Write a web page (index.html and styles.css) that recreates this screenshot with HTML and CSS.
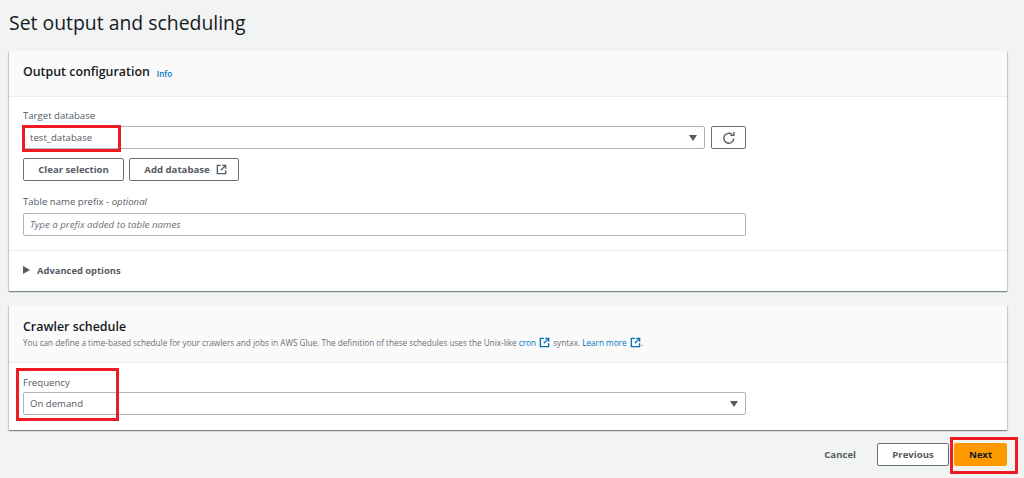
FILE: index.html
```html
<!DOCTYPE html>
<html>
<head>
  <title>Set output and scheduling</title>
  <link rel="stylesheet" href="styles.css">
</head>
<body>
  <h1 class="page-title">Set output and scheduling</h1>

  <div class="card">
    <div class="card-header card-header-output">
      <h2>Output configuration</h2>
      <a class="info-link">Info</a>
    </div>
    <div class="card-body">
      <label class="field-label">Target database</label>
      <div class="select-row">
        <div class="select-box select-grow">
          <span>test_database</span>
          <span class="caret"></span>
          <div class="highlight highlight-target"></div>
        </div>
        <button class="btn btn-icon">
          <svg width="14" height="14" viewBox="0 0 16 16" fill="none" stroke="#545b64" stroke-width="1.6">
            <path d="M13.5 8.5a5.7 5.7 0 1 1-2-4.6"/>
            <path d="M13.6 1v4h-4" />
          </svg>
        </button>
      </div>
      <div class="button-row">
        <button class="btn btn-clear">Clear selection</button>
        <button class="btn btn-add">Add database
          <svg width="11" height="11" viewBox="0 0 16 16" fill="none" stroke="#545b64" stroke-width="2">
            <path d="M7 2H2v12h12V9"/>
            <path d="M9 2h5v5M14 2L7 9"/>
          </svg>
        </button>
      </div>
      <label class="field-label field-label-prefix">Table name prefix - <em>optional</em></label>
      <div class="text-input">Type a prefix added to table names</div>
    </div>
    <div class="card-footer">
      <span class="arrow-right"></span>
      <span>Advanced options</span>
    </div>
  </div>

  <div class="card card-schedule">
    <div class="card-header card-header-schedule">
      <h2>Crawler schedule</h2>
      <p>You can define a time-based schedule for your crawlers and jobs in AWS Glue. The definition of these schedules uses the Unix-like
        <a>cron<svg class="ext-icon" width="11" height="11" viewBox="0 0 16 16" fill="none" stroke="#0073bb" stroke-width="2">
            <path d="M7 2H2v12h12V9"/>
            <path d="M9 2h5v5M14 2L7 9"/>
          </svg></a> syntax.
        <a>Learn more<svg class="ext-icon" width="11" height="11" viewBox="0 0 16 16" fill="none" stroke="#0073bb" stroke-width="2">
            <path d="M7 2H2v12h12V9"/>
            <path d="M9 2h5v5M14 2L7 9"/>
          </svg></a>.
      </p>
    </div>
    <div class="card-body card-body-schedule">
      <label class="field-label field-label-frequency">Frequency</label>
      <div class="select-box select-wide">
        <span>On demand</span>
        <span class="caret"></span>
        <div class="highlight highlight-frequency"></div>
      </div>
    </div>
  </div>

  <div class="actions">
    <a class="cancel-link">Cancel</a>
    <button class="btn btn-previous">Previous</button>
    <button class="btn btn-next">Next
      <div class="highlight highlight-next"></div>
    </button>
  </div>
</body>
</html>
```

FILE: styles.css
```css
body {
  font-family: "Open Sans", "Noto Sans", sans-serif;
  margin: 0;
  padding: 0 17px 0 9px;
  height: 478px;
  box-sizing: border-box;
  overflow: hidden;
  background-color: #f2f3f3;
  color: #16191f;
  font-size: 9.6px;
}

.page-title {
  margin: 0;
  height: 51px;
  padding-top: 11px;
  box-sizing: border-box;
  font-size: 19.4px;
  line-height: 24px;
  font-weight: 400;
}

.card {
  background-color: #fff;
  box-shadow: 0 1px 1px rgba(0, 28, 36, 0.3), 1px 1px 1px rgba(0, 28, 36, 0.15), -1px 1px 1px rgba(0, 28, 36, 0.15);
}

.card-schedule {
  margin-top: 14px;
}

.card-header {
  background-color: #fafafa;
  border-bottom: 1px solid #eaeded;
  padding: 0 14px;
  box-sizing: border-box;
}

.card-header h2 {
  margin: 0;
  font-size: 12.4px;
  line-height: 16px;
  font-weight: 600;
}

.card-header-output {
  height: 46px;
  padding-bottom: 3px;
  display: flex;
  align-items: center;
  gap: 7px;
}

.card-header-schedule {
  height: 58px;
  padding-top: 14px;
}

.card-header-schedule p {
  margin: 1px 0 0;
  font-size: 8.2px;
  line-height: 14px;
  white-space: nowrap;
  color: #687078;
}

.card-header-schedule a,
.info-link {
  color: #0073bb;
}

.info-link {
  font-size: 8px;
  font-weight: 600;
  margin-top: 2px;
}

.ext-icon {
  vertical-align: -2px;
  margin: 0 1px 0 3px;
}

.card-body {
  padding: 12px 14px 14px;
  border-bottom: 1px solid #eaeded;
}

.card-body-schedule {
  padding-top: 13px;
  padding-bottom: 15px;
  border-bottom: none;
}

.field-label {
  display: block;
  font-size: 9.6px;
  line-height: 14px;
  color: #545b64;
  margin-bottom: 3px;
}

.field-label-prefix {
  margin-top: 14px;
  margin-bottom: 4px;
}

.field-label-frequency {
  margin-bottom: 2px;
}

.select-row {
  display: flex;
  gap: 6px;
  width: 723px;
}

.select-box {
  position: relative;
  height: 23px;
  box-sizing: border-box;
  border: 1px solid #aab7b8;
  border-radius: 2px;
  padding-left: 6px;
  display: flex;
  align-items: center;
  justify-content: space-between;
  font-size: 9.6px;
  color: #545b64;
}

.select-grow {
  flex: 1;
}

.select-wide {
  width: 723px;
}

.caret {
  width: 0;
  height: 0;
  margin-right: 7px;
  border-left: 4px solid transparent;
  border-right: 4px solid transparent;
  border-top: 6px solid #545b64;
}

.btn {
  font-family: inherit;
  height: 23px;
  box-sizing: border-box;
  background-color: #fff;
  border: 1px solid #687078;
  border-radius: 2px;
  padding: 0;
  font-size: 9.6px;
  font-weight: 700;
  color: #545b64;
}

.btn-icon {
  width: 35px;
  display: flex;
  align-items: center;
  justify-content: center;
}

.button-row {
  display: flex;
  gap: 5px;
  margin-top: 9px;
}

.btn-clear {
  width: 101px;
}

.btn-add {
  width: 110px;
  padding-left: 3px;
  display: flex;
  align-items: center;
  justify-content: center;
  gap: 6px;
}

.text-input {
  width: 723px;
  height: 23px;
  box-sizing: border-box;
  border: 1px solid #aab7b8;
  border-radius: 2px;
  padding-left: 6px;
  font-size: 9.7px;
  line-height: 21px;
  font-style: italic;
  color: #687078;
}

.card-footer {
  height: 40px;
  padding-left: 14px;
  padding-bottom: 2px;
  box-sizing: border-box;
  display: flex;
  align-items: center;
  gap: 7px;
  font-size: 9.4px;
  font-weight: 700;
  color: #545b64;
}

.arrow-right {
  width: 0;
  height: 0;
  border-top: 4px solid transparent;
  border-bottom: 4px solid transparent;
  border-left: 7px solid #545b64;
}

.actions {
  display: flex;
  justify-content: flex-end;
  align-items: center;
  margin-top: 13px;
}

.cancel-link {
  font-size: 9.6px;
  font-weight: 700;
  color: #545b64;
  margin-right: 21px;
}

.btn-previous {
  width: 72px;
  margin-right: 5px;
}

.btn-next {
  position: relative;
  width: 53px;
  background-color: #ff9900;
  border-color: #ff9900;
  color: #16191f;
}

/* red annotation boxes drawn over the screenshot */
.highlight {
  position: absolute;
  box-sizing: border-box;
  border: 3px solid #ed1c24;
}

.highlight-target {
  left: -2px;
  top: -2px;
  width: 99px;
  height: 27px;
}

.highlight-frequency {
  left: -8px;
  top: -25px;
  width: 103px;
  height: 53px;
}

.highlight-next {
  left: -5px;
  top: -7px;
  width: 68px;
  height: 37px;
}
```
